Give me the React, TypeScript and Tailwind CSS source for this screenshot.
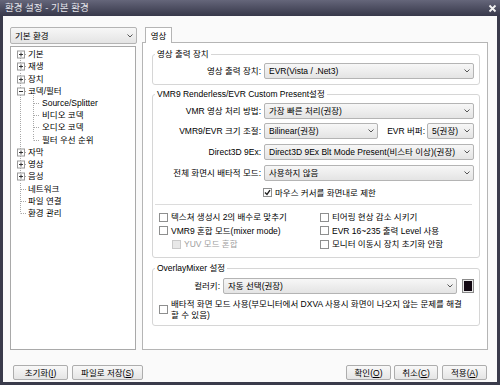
import React from 'react'

const tree = [
  { label: '기본', kind: 'plus' },
  { label: '재생', kind: 'plus' },
  { label: '장치', kind: 'plus' },
  { label: '코덱/필터', kind: 'minus' },
  { label: 'Source/Splitter', kind: 'child' },
  { label: '비디오 코덱', kind: 'child' },
  { label: '오디오 코덱', kind: 'child' },
  { label: '필터 우선 순위', kind: 'childLast' },
  { label: '자막', kind: 'plus' },
  { label: '영상', kind: 'plus' },
  { label: '음성', kind: 'plus' },
  { label: '네트워크', kind: 'leaf' },
  { label: '파일 연결', kind: 'leaf' },
  { label: '환경 관리', kind: 'last' },
]

const dot = { stroke: '#a8a8a8', strokeWidth: 1, strokeDasharray: '1 1' }

function TreeLines({ kind, first }: { kind: string; first: boolean }) {
  const child = kind === 'child' || kind === 'childLast'
  return (
    <svg width="32" height="12" viewBox="0 0 32 12" className="shrink-0">
      {/* root level vertical line */}
      <line x1="9.5" y1={first ? 6 : 0} x2="9.5" y2={kind === 'last' ? 6.5 : 12} {...dot} />
      {!child && <line x1="10" y1="6.5" x2="16" y2="6.5" {...dot} />}
      {child && (
        <>
          <line x1="22.5" y1="0" x2="22.5" y2={kind === 'childLast' ? 6.5 : 12} {...dot} />
          <line x1="23" y1="6.5" x2="29" y2="6.5" {...dot} />
        </>
      )}
      {kind === 'minus' && <line x1="22.5" y1="8" x2="22.5" y2="12" {...dot} />}
      {(kind === 'plus' || kind === 'minus') && (
        <>
          <rect x="6.5" y="3" width="7" height="7" fill="#fff" stroke="#9a9a9a" />
          <line x1="8" y1="6.5" x2="12" y2="6.5" stroke="#333" />
          {kind === 'plus' && <line x1="10" y1="4.5" x2="10" y2="8.5" stroke="#333" />}
        </>
      )}
    </svg>
  )
}

function Chevron() {
  return (
    <svg width="6" height="4" viewBox="0 0 6 4" className="shrink-0">
      <path d="M0.5 0.5 L3 3 L5.5 0.5" stroke="#555" strokeWidth="1" fill="none" />
    </svg>
  )
}

function Select({ value, className = '' }: { value: string; className?: string }) {
  return (
    <div
      className={`h-[16px] flex items-center gap-[2px] pl-[4px] pr-[3px] border border-[#b4b4b4] rounded-[2px] bg-gradient-to-b from-[#f7f7f7] to-[#e4e4e4] ${className}`}
    >
      <span className="flex-1 whitespace-nowrap overflow-hidden">{value}</span>
      <Chevron />
    </div>
  )
}

function Check({ checked, disabled }: { checked?: boolean; disabled?: boolean }) {
  return (
    <span
      className={`w-[9px] h-[9px] shrink-0 border flex items-center justify-center ${
        disabled ? 'border-[#c9c9c9] bg-[#e8e8e8]' : 'border-[#8e8f8f] bg-white'
      }`}
    >
      {checked && (
        <svg width="7" height="7" viewBox="0 0 7 7">
          <path d="M1 3.5 L3 5.5 L6 1.2" stroke="#222" strokeWidth="1.4" fill="none" />
        </svg>
      )}
    </span>
  )
}

function CheckRow({ label, checked, disabled }: { label: string; checked?: boolean; disabled?: boolean }) {
  return (
    <div className={`h-[13.5px] flex items-center gap-[3px] whitespace-nowrap ${disabled ? 'text-[#a0a0a0]' : ''}`}>
      <Check checked={checked} disabled={disabled} />
      <span>{label}</span>
    </div>
  )
}

function Button({ children, className = '' }: { children: React.ReactNode; className?: string }) {
  return (
    <div
      className={`h-[15px] flex items-center justify-center border border-[#adadad] rounded-[2px] bg-gradient-to-b from-[#f8f8f8] to-[#e5e5e5] ${className}`}
    >
      {children}
    </div>
  )
}

function Group({ title, children, className = '' }: { title: string; children: React.ReactNode; className?: string }) {
  return (
    <fieldset className={`border border-[#d6d6d6] rounded-[3px] pr-[5px] ${className}`}>
      <legend className="ml-[2px] px-[2px] leading-[12px]">{title}</legend>
      {children}
    </fieldset>
  )
}

export default function App() {
  return (
    <div className="w-[500px] h-[385px] flex flex-col bg-[#3a3b4b] text-black text-[8.5px] leading-[12px] font-['Liberation_Sans','Noto_Sans_CJK_KR',sans-serif] overflow-hidden">
      <div className="h-[16px] shrink-0 flex items-center justify-between pl-[5px] pr-[3px] bg-gradient-to-b from-[#65667a] to-[#37384a] text-[#e6e6ec] text-[9.5px]">
        <span>환경 설정 - 기본 환경</span>
        <svg width="9" height="9" viewBox="0 0 9 9">
          <path d="M1.5 1.5 L7.5 7.5 M7.5 1.5 L1.5 7.5" stroke="#f2f2f2" strokeWidth="1.8" />
        </svg>
      </div>

      <div className="flex-1 mx-[3px] mb-[3px] bg-[#fafafa] flex flex-col pt-[11px] pl-[7px] pr-[9px]">
        <div className="h-[323px] flex gap-[5px]">
          {/* left side */}
          <div className="w-[127px] flex flex-col gap-[2px]">
            <Select value="기본 환경" className="h-[17px]" />
            <div className="flex-1 mr-[1px] border border-[#a9a9a9] bg-white pt-[1px]">
              {tree.map((t, i) => (
                <div key={t.label} className="h-[12.23px] flex items-center whitespace-nowrap">
                  <TreeLines kind={t.kind} first={i === 0} />
                  <span className={t.kind === 'child' || t.kind === 'childLast' ? '-ml-[1px]' : '-ml-[15px]'}>{t.label}</span>
                </div>
              ))}
            </div>
          </div>

          {/* right side */}
          <div className="flex-1 flex flex-col">
            <div className="h-[15px] flex pl-[3px]">
              <div className="w-[27px] h-[16px] border border-b-0 border-[#b5b5b5] bg-white flex items-center justify-center relative z-10">
                영상
              </div>
            </div>
            <div className="flex-1 border border-[#b5b5b5] bg-white pl-[9px] pr-[7px] pt-[5px]">
              <Group title="영상 출력 장치">
                <div className="flex items-center pt-[3px] pb-[5px]">
                  <span className="w-[108px] text-right">영상 출력 장치:</span>
                  <Select value="EVR(Vista / .Net3)" className="flex-1 ml-[3px]" />
                </div>
              </Group>

              <Group title="VMR9 Renderless/EVR Custom Present설정" className="mt-[3px]">
                <div className="pt-[3px] pb-[6px]">
                  <div className="flex items-center">
                    <span className="w-[108px] text-right">VMR 영상 처리 방법:</span>
                    <Select value="가장 빠른 처리(권장)" className="flex-1 ml-[3px]" />
                  </div>
                  <div className="flex items-center mt-[4px]">
                    <span className="w-[108px] text-right">VMR9/EVR 크기 조절:</span>
                    <Select value="Bilinear(권장)" className="w-[114px] ml-[3px]" />
                    <span className="flex-1 text-right pr-[2px] whitespace-nowrap">EVR 버퍼:</span>
                    <Select value="5(권장)" className="w-[47px]" />
                  </div>
                  <div className="flex items-center mt-[5px]">
                    <span className="w-[108px] text-right">Direct3D 9Ex:</span>
                    <Select value="Direct3D 9Ex Blt Mode Present(비스타 이상)(권장)" className="flex-1 ml-[3px]" />
                  </div>
                  <div className="flex items-center mt-[5px]">
                    <span className="w-[108px] text-right">전체 화면시 배타적 모드:</span>
                    <Select value="사용하지 않음" className="flex-1 ml-[3px]" />
                  </div>
                  <div className="pl-[110px] mt-[5px]">
                    <CheckRow label="마우스 커서를 화면내로 제한" checked />
                  </div>
                  <div className="h-px bg-[#dcdcdc] mx-[2px] mt-[4px]" />
                  <div className="grid grid-cols-[161px_1fr] pl-[6px] mt-[6px]">
                    <div>
                      <CheckRow label="텍스쳐 생성시 2의 배수로 맞추기" />
                      <CheckRow label="VMR9 혼합 모드(mixer mode)" />
                      <div className="pl-[13px]">
                        <CheckRow label="YUV 모드 혼합" disabled />
                      </div>
                    </div>
                    <div>
                      <CheckRow label="티어링 현상 감소 시키기" />
                      <CheckRow label="EVR 16~235 출력 Level 사용" />
                      <CheckRow label="모니터 이동시 장치 초기화 안함" />
                    </div>
                  </div>
                </div>
              </Group>

              <Group title="OverlayMixer 설정" className="mt-[4px]">
                <div className="pt-[4px] pb-[5px]">
                  <div className="flex items-center">
                    <span className="w-[67px] text-right">컬러키:</span>
                    <Select value="자동 선택(권장)" className="flex-1 ml-[3px]" />
                    <div className="w-[12px] h-[14px] ml-[5px] border border-[#8a8a8a] p-px bg-[#e8e8e8]">
                      <div className="w-full h-full bg-[#120812]" />
                    </div>
                  </div>
                  <div className="flex items-center gap-[3px] pl-[6px] mt-[5px]">
                    <Check />
                    <span className="leading-[10.5px]">
                      <span className="whitespace-nowrap">배타적 화면 모드 사용(부모니터에서 DXVA 사용시 화면이 나오지 않는 문제를 해결</span>
                      <br />할 수 있음)
                    </span>
                  </div>
                </div>
              </Group>
            </div>
          </div>
        </div>

        <div className="flex items-center mt-[15px]">
          <Button className="w-[55px] ml-[3px]">
            초기화(<u>I</u>)
          </Button>
          <Button className="w-[71px] ml-[4px]">
            파일로 저장(<u>S</u>)
          </Button>
          <div className="flex-1" />
          <Button className="w-[45px]">
            확인(<u>O</u>)
          </Button>
          <Button className="w-[44px] ml-[3px]">
            취소(<u>C</u>)
          </Button>
          <Button className="w-[45px] ml-[4px] mr-[1px]">
            적용(<u>A</u>)
          </Button>
        </div>
      </div>
    </div>
  )
}
